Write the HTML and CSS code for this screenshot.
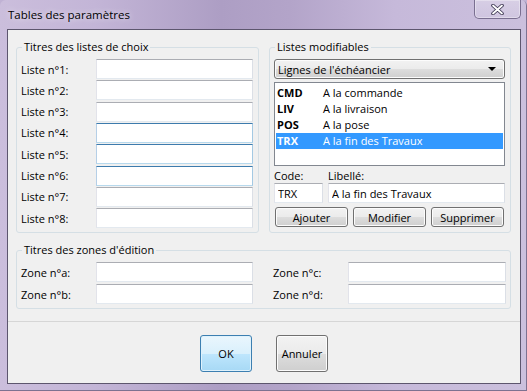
FILE: index.html
```html
<!DOCTYPE html>
<html lang="fr">
<head>
  <meta charset="UTF-8" />
  <title>Tables des paramètres</title>
  <link rel="stylesheet" href="styles.css">
</head>
<body>
  <div class="window">
    <div class="titlebar">
      <span class="title">Tables des paramètres</span>
      <button class="close-btn" title="Fermer">
        <svg width="13" height="11" viewBox="0 0 13 11">
          <path d="M2 1.5 L11 9.5 M11 1.5 L2 9.5" stroke="#3b3550" stroke-width="3.6" stroke-linecap="round" fill="none" />
          <path d="M2 1.5 L11 9.5 M11 1.5 L2 9.5" stroke="#ffffff" stroke-width="1.8" stroke-linecap="round" fill="none" />
        </svg>
      </button>
    </div>

    <div class="client">
      <div class="content">
        <div class="top-groups">
          <fieldset class="group">
            <legend>Titres des listes de choix</legend>
            <div class="fields">
              <label>Liste n°1:</label><input class="field" type="text" />
              <label>Liste n°2:</label><input class="field" type="text" />
              <label>Liste n°3:</label><input class="field" type="text" />
              <label>Liste n°4:</label><input class="field hot" type="text" />
              <label>Liste n°5:</label><input class="field hot" type="text" />
              <label>Liste n°6:</label><input class="field hot" type="text" />
              <label>Liste n°7:</label><input class="field" type="text" />
              <label>Liste n°8:</label><input class="field" type="text" />
            </div>
          </fieldset>

          <fieldset class="group">
            <legend>Listes modifiables</legend>
            <div class="combo">
              <span>Lignes de l'échéancier</span>
              <span class="combo-arrow"></span>
            </div>
            <ul class="listbox">
              <li><b>CMD</b><span>A la commande</span></li>
              <li><b>LIV</b><span>A la livraison</span></li>
              <li><b>POS</b><span>A la pose</span></li>
              <li class="selected"><b>TRX</b><span>A la fin des Travaux</span></li>
            </ul>
            <div class="edit-grid">
              <label>Code:</label>
              <label>Libellé:</label>
              <input class="field" type="text" value="TRX" />
              <input class="field" type="text" value="A la fin des Travaux" />
            </div>
            <div class="edit-buttons">
              <button class="btn">Ajouter</button>
              <button class="btn">Modifier</button>
              <button class="btn">Supprimer</button>
            </div>
          </fieldset>
        </div>

        <fieldset class="group zones">
          <legend>Titres des zones d'édition</legend>
          <div class="zone-fields">
            <label>Zone n°a:</label><input class="field" type="text" />
            <span></span>
            <label>Zone n°c:</label><input class="field" type="text" />
            <label>Zone n°b:</label><input class="field" type="text" />
            <span></span>
            <label>Zone n°d:</label><input class="field" type="text" />
          </div>
        </fieldset>
      </div>

      <div class="separator"></div>

      <div class="footer">
        <button class="btn big default">OK</button>
        <button class="btn big">Annuler</button>
      </div>
    </div>
  </div>
</body>
</html>
```

FILE: styles.css
```css
* {
  box-sizing: border-box;
}
body {
  margin: 0;
  font-family: 'Open Sans', 'Liberation Sans', sans-serif;
  font-size: 11px;
  color: #000;
  background-color: #c0b2d4;
}
.window {
  width: 527px;
  height: 391px;
  display: flex;
  flex-direction: column;
  padding: 0 6px 7px 7px;
  border-radius: 6px 6px 0 0;
  background: linear-gradient(90deg, #cbbedc 0%, #c3b5d7 18%, #ad9ec4 42%, #b3a4c9 55%, #c6b9da 75%, #cbc0dd 100%);
  box-shadow: inset -1px -1px 0 #7d7291;
}
.titlebar {
  height: 29px;
  display: flex;
  justify-content: space-between;
}
.title {
  padding: 7px 0 0 1px;
  font-size: 11.5px;
  text-shadow: 0 0 6px rgba(255, 255, 255, 0.8);
}
.close-btn {
  width: 47px;
  height: 19px;
  padding: 0;
  display: flex;
  align-items: center;
  justify-content: center;
  border: 1px solid #7a6f90;
  border-top: none;
  border-radius: 0 0 5px 5px;
  background: linear-gradient(rgba(255, 255, 255, 0.25), rgba(255, 255, 255, 0.1));
  box-shadow: inset 0 0 0 1px rgba(255, 255, 255, 0.35);
}
.client {
  flex: 1;
  display: flex;
  flex-direction: column;
  background-color: #f0f0f0;
  border: 1px solid #5d566e;
}
.content {
  padding: 10px 9px 0 8px;
}
.top-groups {
  display: grid;
  grid-template-columns: 243px 242px;
  gap: 10px;
}
.group {
  margin: 0;
  min-width: 0;
  padding: 0 5px 4px 4px;
  border: 1px solid #d5dfe5;
  border-radius: 3px;
}
.group legend {
  margin-left: 1px;
  padding: 0 2px;
  line-height: 14px;
}
.fields {
  display: grid;
  grid-template-columns: 75px 157px;
  row-gap: 1.33px;
  margin-top: 5px;
}
label {
  display: flex;
  align-items: center;
}
.field {
  height: 20px;
  margin: 0;
  padding: 0 3px;
  font: inherit;
  background-color: #fff;
  border: 1px solid;
  border-color: #abadb3 #dbdfe6 #e3e9ef #e2e3ea;
  outline: none;
}
.field.hot {
  border-color: #3d7bad #a4c9e3 #b7d9ed #b5cfe7;
}
.combo {
  height: 20px;
  margin-top: 5px;
  padding: 0 8px 0 3px;
  display: flex;
  align-items: center;
  justify-content: space-between;
  border: 1px solid #707070;
  border-radius: 3px;
  background: linear-gradient(#f2f2f2 0%, #ebebeb 50%, #dddddd 51%, #cfcfcf 100%);
  box-shadow: inset 0 0 0 1px #fcfcfc;
}
.combo-arrow {
  width: 0;
  height: 0;
  border-left: 4px solid transparent;
  border-right: 4px solid transparent;
  border-top: 4px solid #000;
}
.listbox {
  height: 84px;
  margin: 3px 0 0;
  padding: 2px 1px 0;
  list-style: none;
  background-color: #fff;
  border: 1px solid #828790;
}
.listbox li {
  display: grid;
  grid-template-columns: 46px 1fr;
  height: 16px;
  line-height: 16px;
  padding-left: 1px;
}
.listbox li.selected {
  background-color: #3399ff;
  color: #fff;
}
.edit-grid {
  display: grid;
  grid-template-columns: 49px 1fr;
  column-gap: 5px;
  margin-top: 2px;
}
.edit-grid label {
  height: 15px;
}
.edit-buttons {
  display: grid;
  grid-template-columns: repeat(3, 73px);
  gap: 5px;
  margin-top: 4px;
  padding-left: 1px;
}
.btn {
  height: 20px;
  padding: 0;
  font: inherit;
  color: #000;
  border: 1px solid #707070;
  border-radius: 3px;
  background: linear-gradient(#f2f2f2 0%, #ebebeb 50%, #dddddd 51%, #cfcfcf 100%);
  box-shadow: inset 0 0 0 1px #fcfcfc;
}
.btn.big {
  width: 52px;
  height: 37px;
}
.btn.default {
  border-color: #3c7fb1;
  background: linear-gradient(#eaf6fd 0%, #d9f0fc 50%, #bee6fd 51%, #a7d9f5 100%);
  box-shadow: inset 0 0 0 1px #dff2fc;
}
.zones {
  margin-top: 10px;
}
.zone-fields {
  display: grid;
  grid-template-columns: 75px 157px 20px 75px 158px;
  row-gap: 2px;
  margin-top: 5px;
}
.separator {
  margin-top: 12px;
  border-top: 1px solid #d6d6d6;
}
.footer {
  display: flex;
  justify-content: center;
  gap: 24px;
  padding-top: 13px;
}
```
